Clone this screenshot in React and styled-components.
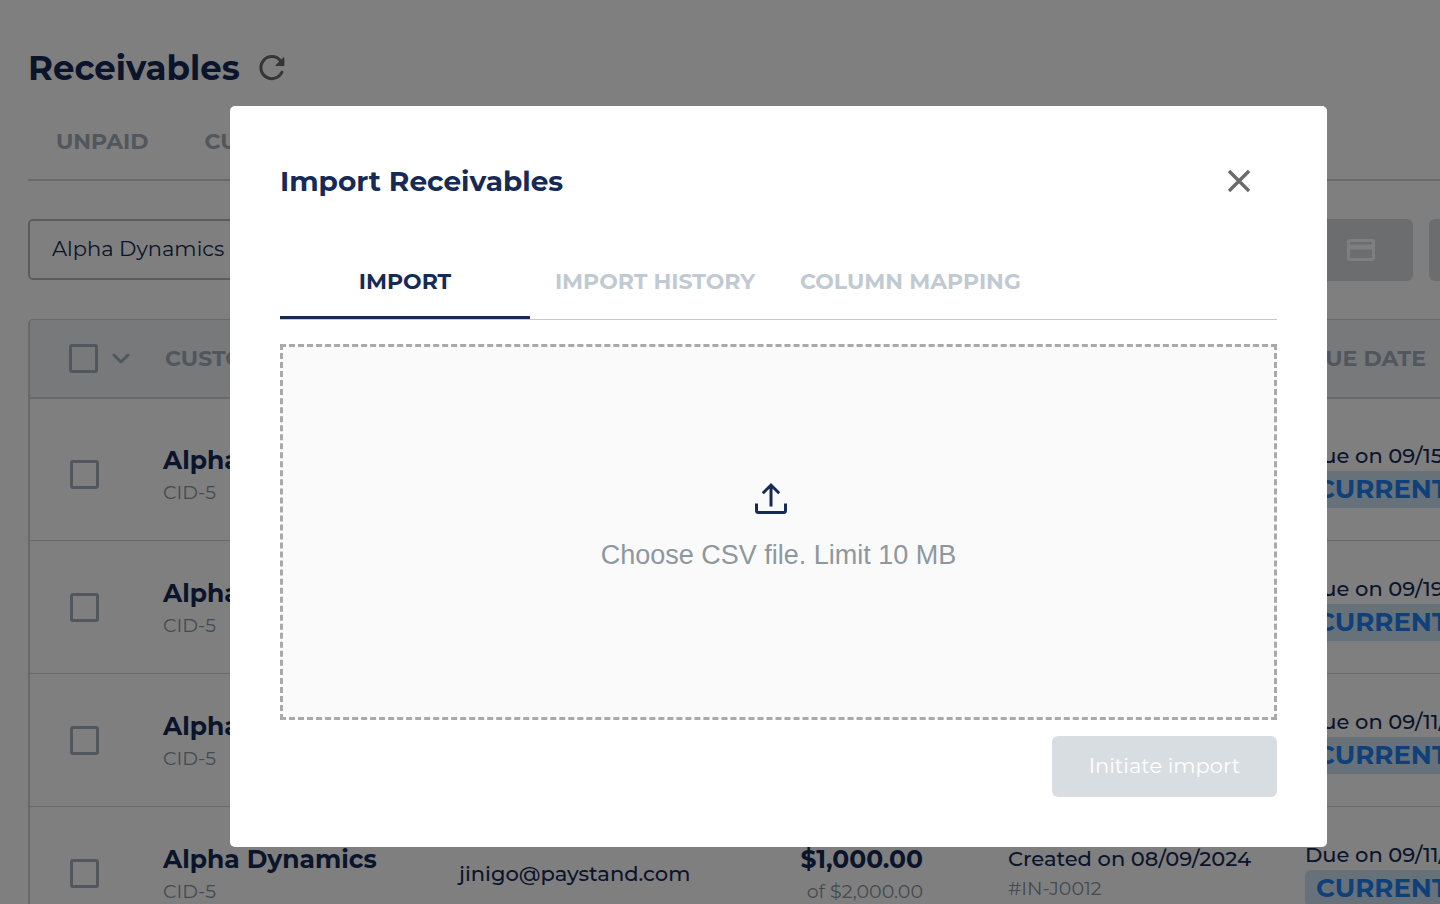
import { useState } from "react";
import styled, { createGlobalStyle } from "styled-components";

const navy = "#152a57";
const slate = "#a2afb9";
const line = "#d3d3d3";

const GlobalStyle = createGlobalStyle`
    * {
        box-sizing: border-box;
    }

    body {
        margin: 0;
        overflow: hidden;
        background: #fff;
        color: ${navy};
        font-family: Montserrat, Inter, "Liberation Sans", sans-serif;
        font-size: 21px;
    }

    button, input {
        font: inherit;
        color: inherit;
    }
`;

const Page = styled.div`
    position: relative;
    min-width: 1557px;
    height: 100vh;
    overflow: hidden;
`;

const Main = styled.main`
    padding: 44px 24px 0 28px;
`;

const TitleRow = styled.header`
    display: flex;
    align-items: center;
    gap: 18px;
    height: 48px;
`;

const PageTitle = styled.h1`
    margin: 0;
    font-size: 34px;
    font-weight: 700;
`;

const IconButton = styled.button`
    display: flex;
    align-items: center;
    justify-content: center;
    padding: 0;
    border: none;
    background: none;
    color: ${({ $color }) => $color || "#6b6b6b"};
    cursor: pointer;
`;

const PageTabs = styled.nav`
    display: flex;
    margin-top: 10px;
    border-bottom: 2px solid ${line};
`;

const PageTab = styled.button`
    height: 77px;
    padding: 2px 28px 0;
    border: none;
    background: none;
    color: ${slate};
    font-size: 22px;
    font-weight: 700;
`;

const Toolbar = styled.div`
    display: flex;
    gap: 16px;
    margin-top: 38px;
`;

const Search = styled.input`
    flex: 1;
    height: 61px;
    padding: 0 22px 2px;
    border: 2px solid #b9b9b9;
    border-radius: 5px;
    background: #fff;
`;

const ToolButton = styled.button`
    display: flex;
    align-items: center;
    justify-content: center;
    width: 104px;
    height: 62px;
    border: none;
    border-radius: 6px;
    background: #d8dbde;
    color: #fff;
`;

const TableFrame = styled.div`
    margin-top: 38px;
    border: 2px solid ${line};
    border-top-width: 1px;
    border-radius: 5px;
    overflow: hidden;
`;

const Table = styled.table`
    width: 100%;
    table-layout: fixed;
    border-collapse: collapse;
`;

const HeadCell = styled.th`
    width: ${({ $width }) => $width};
    height: 78px;
    padding: 0 2px;
    border-bottom: 2px solid ${line};
    background: #f0f3f6;
    color: ${slate};
    font-size: 22px;
    font-weight: 700;
    text-align: left;
`;

const Row = styled.tr`
    height: 133px;
    border-bottom: 1px solid ${line};

    &:first-child {
        height: 142px;
    }

    &:first-child td {
        padding-top: 11px;
    }
`;

const Cell = styled.td`
    padding: 2px 0 0;
    padding-left: ${({ $indent }) => $indent || "0"};
    padding-right: ${({ $end }) => $end || "0"};
    text-align: ${({ $end }) => ($end ? "right" : "left")};
`;

const Select = styled.div`
    display: flex;
    align-items: center;
    gap: 14px;
    padding-left: 37px;
    color: ${slate};
`;

const Check = styled.input`
    appearance: none;
    flex: none;
    width: 29px;
    height: 29px;
    margin: 0;
    border: 3px solid ${slate};
    border-radius: 3px;
`;

const Strong = styled.div`
    font-size: 25px;
    font-weight: 700;
    line-height: 36px;
`;

const Plain = styled.div`
    font-weight: 500;
    line-height: 30px;
`;

const Muted = styled.div`
    color: #8797a3;
    font-size: 19px;
    line-height: 30px;
`;

const Badge = styled.span`
    display: inline-block;
    padding: 0 11px;
    border-radius: 6px;
    background: #cce2f5;
    color: #1f80f5;
    font-size: 26px;
    font-weight: 700;
    line-height: 37px;
`;

const Overlay = styled.div`
    position: absolute;
    inset: 0;
    display: flex;
    justify-content: center;
    align-items: flex-start;
    padding-top: 106px;
    background: rgba(0, 0, 0, 0.5);
`;

const Modal = styled.section`
    width: 90%;
    max-width: 1097px;
    padding: 50px;
    border-radius: 5px;
    background: #fff;
`;

const ModalHead = styled.header`
    display: flex;
    align-items: center;
    justify-content: space-between;
    height: 50px;

    button {
        width: 76px;
        height: 50px;
    }
`;

const ModalTitle = styled.h2`
    margin: 0;
    font-size: 28px;
    font-weight: 700;
`;

const ModalTabs = styled.nav`
    display: flex;
    margin-top: 39px;
    border-bottom: 1px solid #c8c8c8;
`;

const ModalTab = styled.button`
    min-width: 250px;
    height: 74px;
    padding: 2px 20px 0;
    border: none;
    border-bottom: 3px solid ${({ $active }) => ($active ? navy : "transparent")};
    background: none;
    color: ${({ $active }) => ($active ? navy : "#c1cad2")};
    font-size: 22px;
    font-weight: 700;
    cursor: pointer;
`;

const DropZone = styled.label`
    display: flex;
    flex-direction: column;
    align-items: center;
    justify-content: center;
    gap: 24px;
    height: 376px;
    margin-top: 24px;
    padding-bottom: 12px;
    border: 3px dashed #a9a9a9;
    background: #fafafa;
    color: #8d979f;
    font-family: "Liberation Sans", Arial, sans-serif;
    font-size: 27px;
    line-height: 32px;
    cursor: pointer;

    svg {
        margin-right: 15px;
        color: ${navy};
    }
`;

const FileInput = styled.input`
    position: absolute;
    width: 1px;
    height: 1px;
    opacity: 0;
`;

const ModalFooter = styled.footer`
    display: flex;
    justify-content: flex-end;
    margin-top: 16px;
`;

const SubmitButton = styled.button`
    width: 225px;
    height: 61px;
    padding: 0 0 2px;
    border: none;
    border-radius: 6px;
    background: #d8dde1;
    color: #fff;
`;

const RefreshIcon = () => (
    <svg width="28" height="28" viewBox="0 0 28 28" fill="none" stroke="currentColor" strokeWidth="3" strokeLinecap="round">
        <path d="M23.9 18.2A11 11 0 1 1 22.2 6.4" />
        <path d="M25.2 3.4a.7.7 0 0 1 1.2.5v7.3a.9.9 0 0 1-.9.9h-7.3a.7.7 0 0 1-.5-1.2z" fill="currentColor" stroke="none" />
    </svg>
);

const CloseIcon = () => (
    <svg width="24" height="24" viewBox="0 0 24 24" stroke="currentColor" strokeWidth="3.4">
        <path d="M2 2l20 20M22 2L2 22" />
    </svg>
);

const ChevronIcon = () => (
    <svg width="18" height="14" viewBox="0 0 18 14" fill="none" stroke="currentColor" strokeWidth="3" strokeLinecap="round" strokeLinejoin="round">
        <path d="M2 3l7 7 7-7" />
    </svg>
);

const CardIcon = () => (
    <svg width="28" height="22" viewBox="0 0 28 22" fill="none" stroke="currentColor">
        <rect x="1.5" y="1.5" width="25" height="19" rx="1.5" strokeWidth="3" />
        <path d="M2 8h24" strokeWidth="5" />
    </svg>
);

const UploadIcon = () => (
    <svg width="34" height="34" viewBox="0 0 34 34" fill="none" stroke="currentColor" strokeWidth="3">
        <path d="M17 25.5V4M8.8 12.2L17 4l8.2 8.2" />
        <path d="M2.5 22.5v7a2 2 0 0 0 2 2h25a2 2 0 0 0 2-2v-7" />
    </svg>
);

const receivables = [
    { id: 1, invoice: "#IN-J0015", created: "08/09/2024", due: "09/15/2024" },
    { id: 2, invoice: "#IN-J0014", created: "08/09/2024", due: "09/19/2024" },
    { id: 3, invoice: "#IN-J0013", created: "08/09/2024", due: "09/11/2024" },
    { id: 4, invoice: "#IN-J0012", created: "08/09/2024", due: "09/11/2024" },
];

const tabs = ["IMPORT", "IMPORT HISTORY", "COLUMN MAPPING"];

function ReceivablesTable() {
    return (
        <TableFrame>
            <Table>
                <thead>
                    <tr>
                        <HeadCell $width="133px">
                            <Select>
                                <Check type="checkbox" aria-label="Select all" />
                                <IconButton $color={slate} aria-label="Selection options"><ChevronIcon /></IconButton>
                            </Select>
                        </HeadCell>
                        <HeadCell $width="296px">CUSTOMER</HeadCell>
                        <HeadCell $width="296px">EMAIL</HeadCell>
                        <HeadCell $width="253px">AMOUNT</HeadCell>
                        <HeadCell $width="297px">CREATED</HeadCell>
                        <HeadCell>DUE DATE</HeadCell>
                    </tr>
                </thead>
                <tbody>
                    {receivables.map((item) => (
                        <Row key={item.id}>
                            <Cell $indent="3px"><Select><Check type="checkbox" aria-label={`Select ${item.invoice}`} /></Select></Cell>
                            <Cell>
                                <Strong>Alpha Dynamics</Strong>
                                <Muted>CID-5</Muted>
                            </Cell>
                            <Cell><Plain>jinigo@paystand.com</Plain></Cell>
                            <Cell $end="85px">
                                <Strong>$1,000.00</Strong>
                                <Muted>of $2,000.00</Muted>
                            </Cell>
                            <Cell>
                                <Plain>Created on {item.created}</Plain>
                                <Muted>{item.invoice}</Muted>
                            </Cell>
                            <Cell>
                                <Plain>Due on {item.due}</Plain>
                                <Badge>CURRENT</Badge>
                            </Cell>
                        </Row>
                    ))}
                </tbody>
            </Table>
        </TableFrame>
    );
}

function ImportModal() {
    const [selected, setSelected] = useState(tabs[0]);

    return (
        <Overlay>
            <Modal role="dialog" aria-modal="true" aria-labelledby="import-title">
                <ModalHead>
                    <ModalTitle id="import-title">Import Receivables</ModalTitle>
                    <IconButton aria-label="Close"><CloseIcon /></IconButton>
                </ModalHead>
                <ModalTabs>
                    {tabs.map((tab) => (
                        <ModalTab key={tab} $active={selected === tab} onClick={() => setSelected(tab)}>{tab}</ModalTab>
                    ))}
                </ModalTabs>
                <DropZone htmlFor="csv-file">
                    <UploadIcon />
                    Choose CSV file. Limit 10 MB
                    <FileInput id="csv-file" type="file" accept=".csv" />
                </DropZone>
                <ModalFooter>
                    <SubmitButton disabled>Initiate import</SubmitButton>
                </ModalFooter>
            </Modal>
        </Overlay>
    );
}

function App() {
    return (
        <>
            <GlobalStyle />
            <Page>
                <Main>
                    <TitleRow>
                        <PageTitle>Receivables</PageTitle>
                        <IconButton aria-label="Refresh"><RefreshIcon /></IconButton>
                    </TitleRow>
                    <PageTabs>
                        <PageTab>UNPAID</PageTab>
                        <PageTab>CURRENT</PageTab>
                    </PageTabs>
                    <Toolbar>
                        <Search type="text" aria-label="Search receivables" defaultValue="Alpha Dynamics" />
                        <ToolButton aria-label="Pay by card"><CardIcon /></ToolButton>
                        <ToolButton aria-label="Pay by card later"><CardIcon /></ToolButton>
                    </Toolbar>
                    <ReceivablesTable />
                </Main>
                <ImportModal />
            </Page>
        </>
    );
}

export default App;
